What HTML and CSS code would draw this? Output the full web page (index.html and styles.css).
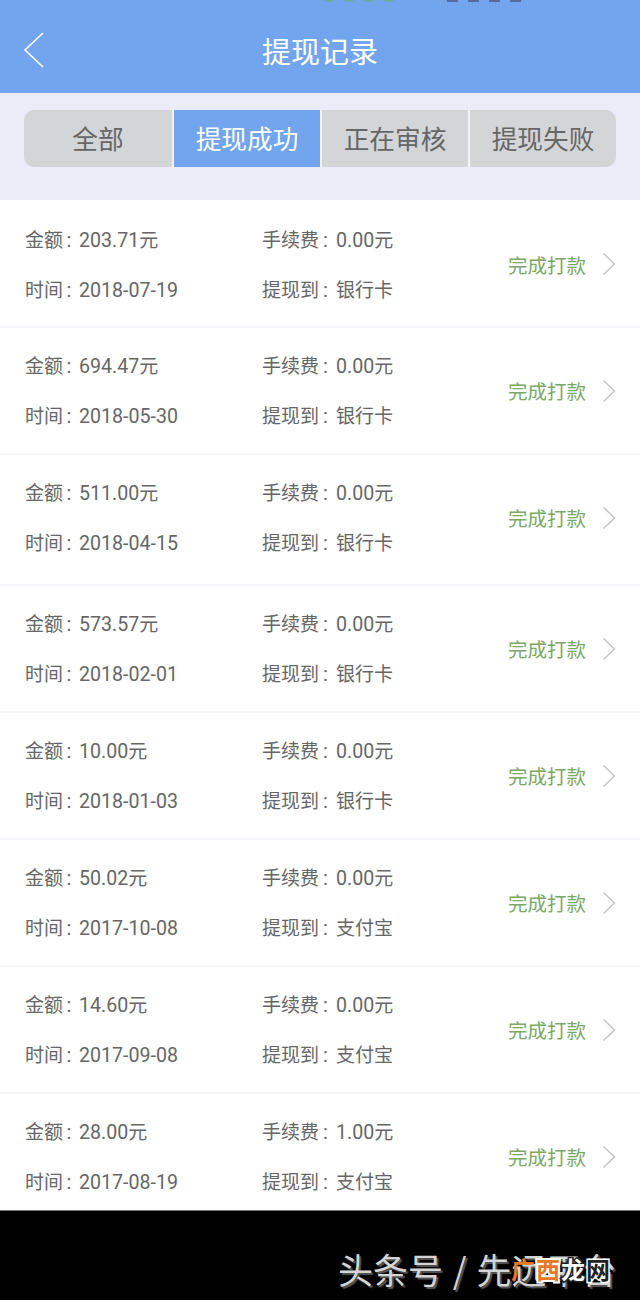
FILE: index.html
```html
<!DOCTYPE html>
<html lang="zh">
<head>
<meta charset="utf-8">
<title>提现记录</title>
<link rel="stylesheet" href="styles.css">
</head>
<body>
<header class="topbar">
  <div class="status"><span class="dots"><i></i><i></i><i></i><i></i></span><span class="bars"><i></i><i></i><i></i><i></i></span></div>
  <div class="nav">
    <svg class="back" width="24" height="38" viewBox="0 0 24 38"><path d="M21 2 L3 19 L21 36" fill="none" stroke="#fff" stroke-width="1.6"/></svg>
    <h1>提现记录</h1>
  </div>
</header>
<div class="tabs-wrap">
  <div class="tabs">
    <div class="tab">全部</div>
    <div class="tab on">提现成功</div>
    <div class="tab">正在审核</div>
    <div class="tab">提现失败</div>
  </div>
</div>
<main class="list">
  <div class="row first"><div class="col1"><p>金额<span class="k">:</span><span class="n">203.71</span>元</p><p>时间<span class="k">:</span><span class="n">2018-07-19</span></p></div><div class="col2"><p>手续费<span class="k">:</span><span class="n">0.00</span>元</p><p>提现到<span class="k">:</span>银行卡</p></div><div class="st">完成打款</div><svg class="chev" width="14" height="24" viewBox="0 0 14 24"><path d="M1.500 1.500 L12.500 12 L1.500 22.500" fill="none" stroke="#c4c4c4" stroke-width="1.500"/></svg></div>
  <div class="row"><div class="col1"><p>金额<span class="k">:</span><span class="n">694.47</span>元</p><p>时间<span class="k">:</span><span class="n">2018-05-30</span></p></div><div class="col2"><p>手续费<span class="k">:</span><span class="n">0.00</span>元</p><p>提现到<span class="k">:</span>银行卡</p></div><div class="st">完成打款</div><svg class="chev" width="14" height="24" viewBox="0 0 14 24"><path d="M1.500 1.500 L12.500 12 L1.500 22.500" fill="none" stroke="#c4c4c4" stroke-width="1.500"/></svg></div>
  <div class="row tall"><div class="col1"><p>金额<span class="k">:</span><span class="n">511.00</span>元</p><p>时间<span class="k">:</span><span class="n">2018-04-15</span></p></div><div class="col2"><p>手续费<span class="k">:</span><span class="n">0.00</span>元</p><p>提现到<span class="k">:</span>银行卡</p></div><div class="st">完成打款</div><svg class="chev" width="14" height="24" viewBox="0 0 14 24"><path d="M1.500 1.500 L12.500 12 L1.500 22.500" fill="none" stroke="#c4c4c4" stroke-width="1.500"/></svg></div>
  <div class="row"><div class="col1"><p>金额<span class="k">:</span><span class="n">573.57</span>元</p><p>时间<span class="k">:</span><span class="n">2018-02-01</span></p></div><div class="col2"><p>手续费<span class="k">:</span><span class="n">0.00</span>元</p><p>提现到<span class="k">:</span>银行卡</p></div><div class="st">完成打款</div><svg class="chev" width="14" height="24" viewBox="0 0 14 24"><path d="M1.500 1.500 L12.500 12 L1.500 22.500" fill="none" stroke="#c4c4c4" stroke-width="1.500"/></svg></div>
  <div class="row"><div class="col1"><p>金额<span class="k">:</span><span class="n">10.00</span>元</p><p>时间<span class="k">:</span><span class="n">2018-01-03</span></p></div><div class="col2"><p>手续费<span class="k">:</span><span class="n">0.00</span>元</p><p>提现到<span class="k">:</span>银行卡</p></div><div class="st">完成打款</div><svg class="chev" width="14" height="24" viewBox="0 0 14 24"><path d="M1.500 1.500 L12.500 12 L1.500 22.500" fill="none" stroke="#c4c4c4" stroke-width="1.500"/></svg></div>
  <div class="row"><div class="col1"><p>金额<span class="k">:</span><span class="n">50.02</span>元</p><p>时间<span class="k">:</span><span class="n">2017-10-08</span></p></div><div class="col2"><p>手续费<span class="k">:</span><span class="n">0.00</span>元</p><p>提现到<span class="k">:</span>支付宝</p></div><div class="st">完成打款</div><svg class="chev" width="14" height="24" viewBox="0 0 14 24"><path d="M1.500 1.500 L12.500 12 L1.500 22.500" fill="none" stroke="#c4c4c4" stroke-width="1.500"/></svg></div>
  <div class="row"><div class="col1"><p>金额<span class="k">:</span><span class="n">14.60</span>元</p><p>时间<span class="k">:</span><span class="n">2017-09-08</span></p></div><div class="col2"><p>手续费<span class="k">:</span><span class="n">0.00</span>元</p><p>提现到<span class="k">:</span>支付宝</p></div><div class="st">完成打款</div><svg class="chev" width="14" height="24" viewBox="0 0 14 24"><path d="M1.500 1.500 L12.500 12 L1.500 22.500" fill="none" stroke="#c4c4c4" stroke-width="1.500"/></svg></div>
  <div class="row"><div class="col1"><p>金额<span class="k">:</span><span class="n">28.00</span>元</p><p>时间<span class="k">:</span><span class="n">2017-08-19</span></p></div><div class="col2"><p>手续费<span class="k">:</span><span class="n">1.00</span>元</p><p>提现到<span class="k">:</span>支付宝</p></div><div class="st">完成打款</div><svg class="chev" width="14" height="24" viewBox="0 0 14 24"><path d="M1.500 1.500 L12.500 12 L1.500 22.500" fill="none" stroke="#c4c4c4" stroke-width="1.500"/></svg></div>
</main>
<footer class="foot">
  <div class="mark">头条号 / 先远平台<span class="stamp"><b class="a">广</b><b class="b">西</b><b class="c">龙</b><b class="d">网</b></span></div>
</footer>
</body>
</html>
```
FILE: styles.css
```css
* { box-sizing: border-box; }
html, body { margin: 0; padding: 0; }
body { width: 640px; height: 1300px; overflow: hidden; background: #fff; font-family: "Noto Sans CJK SC", "Noto Sans", sans-serif; color: #666; }
p, h1 { margin: 0; font-weight: 400; }
.topbar { height: 93px; background: #73a5ee; display: flex; flex-direction: column; }
.status { height: 6px; display: flex; padding-left: 324px; gap: 53px; overflow: hidden; }
.dots, .bars { display: flex; gap: 10px; }
.dots i { width: 10px; height: 4px; margin-top: -2px; border-radius: 50%; background: #6cab9f; }
.bars i { width: 11px; height: 2px; background: #5a6a9c; }
.nav { flex: 1; display: grid; grid-template-columns: 1fr auto 1fr; align-items: center; padding-top: 1px; }
.back { margin-left: 22px; }
.nav h1 { font-size: 29px; color: #fff; line-height: 40px; }
.tabs-wrap { height: 107px; background: #ebecf8; padding: 17px 24px 0; }
.tabs { display: flex; height: 57px; background: #d3d5d7; border-radius: 10px; overflow: hidden; }
.tab { flex: 1; display: flex; align-items: center; justify-content: center; font-size: 25.700px; color: #666; border-left: 2px solid #f1f3f9; padding-bottom: 2px; }
.tab:first-child { border-left: 0; flex: 0 0 148px; }
.tab.on { background: #73a5ee; color: #fff; }
.list { height: 1010px; overflow: hidden; }
.row { height: 127px; display: flex; align-items: center; padding-left: 25px; border-bottom: 2px solid #f4f5fa; }
.row.first { height: 128px; padding-top: 2px; }
.row.tall { height: 131px; padding-bottom: 4px; }
.col1, .col2 { padding-bottom: 1px; }
.col1 { width: 237px; }
.col2 { width: 246px; }
.col1 p, .col2 p { font-size: 19px; height: 50px; line-height: 50px; color: #666; white-space: nowrap; }
.k { display: inline-block; width: 17px; text-align: center; font-family: Roboto, sans-serif; font-size: 20px; line-height: 20px; padding-right: 4px; }
.col1 .k { width: 16px; }
.n { font-family: Roboto, "Noto Sans", sans-serif; font-size: 19.600px; line-height: 20px; }
.st { font-size: 19.500px; color: #7aa866; width: 94px; white-space: nowrap; }
.chev { display: block; }
.foot { height: 90px; background: #000; border-top: 1px solid #777; padding: 36px 0 0 338px; }
.mark { position: relative; font-size: 35px; line-height: 44px; color: #d4d4d4; white-space: nowrap; word-spacing: 2px; text-shadow: 2px 2px 1px #555; }
.stamp { position: absolute; left: 173px; top: 8px; display: flex; gap: 1px; font-size: 24px; line-height: 28px; text-shadow: none; word-spacing: 0; }
.stamp b { font-weight: 700; paint-order: stroke fill; }
.a { color: #e8772a; }
.b { color: #e8772a; -webkit-text-stroke: 4px #fff; }
.c { color: #fff; -webkit-text-stroke: 3px #222; }
.d { color: #222; -webkit-text-stroke: 3px #fff; }
```
